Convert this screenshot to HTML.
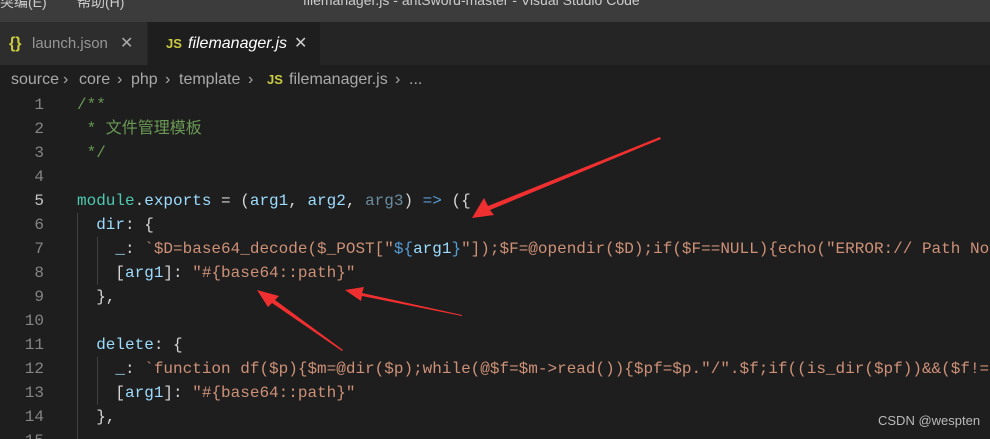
<!DOCTYPE html>
<html><head><meta charset="utf-8"><style>
html,body{margin:0;width:990px;height:439px;overflow:hidden}
body{background:#1e1e1e;font-family:"Liberation Sans","Noto Sans CJK SC",sans-serif;position:relative}
.title{position:absolute;left:0;top:0;width:990px;height:22px;background:#3c3c3c;color:#ccc;font-size:14px;overflow:hidden}
.tabs{position:absolute;top:22px;left:0;width:990px;height:43px;background:#252526}
.tab{position:absolute;top:0;height:43px;line-height:43px;font-size:16px}
.bc{position:absolute;top:65px;left:0;width:990px;height:30px;line-height:30px;color:#a9a9a9;font-size:16px}
.bc span{position:absolute;top:0}
.code{position:absolute;top:93px;left:0;font-family:"Liberation Mono","Noto Sans CJK SC",monospace;font-size:16px}
.l{height:24px;line-height:24px;position:relative;white-space:pre}
.n{position:absolute;left:0;width:44px;text-align:right;color:#858585}
.t{position:absolute;left:77px;color:#d4d4d4}
.c{color:#6a9955}.m{color:#4ec9b0}.v{color:#9cdcfe}.k{color:#569cd6}.s{color:#ce9178}
.g{position:absolute;width:1px;background:#404040}
</style></head><body>
<div class="title"><span style="position:absolute;left:0;top:-8px">突编(E)</span><span style="position:absolute;left:77px;top:-8px">帮助(H)</span><span style="position:absolute;left:303px;top:-8px">filemanager.js - antSword-master - Visual Studio Code</span></div>
<div class="tabs">
<div class="tab" style="left:0;width:147px;background:#2d2d2d;color:#969696"><span style="position:absolute;left:9px;color:#cbcb41;font-weight:bold">{}</span><span style="position:absolute;left:32px;font-size:15px">launch.json</span><span style="position:absolute;left:120px;color:#aaa">✕</span></div>
<div class="tab" style="left:148px;width:172px;background:#1e1e1e;color:#fff"><span style="position:absolute;left:18px;color:#cbcb41;font-size:13px;font-weight:bold">JS</span><span style="position:absolute;left:40px;font-style:italic">filemanager.js</span><span style="position:absolute;left:146px;color:#ccc">✕</span></div>
</div>
<div class="bc"><span style="left:11px">source</span><span style="left:63px">›</span><span style="left:79px">core</span><span style="left:117px">›</span><span style="left:131px">php</span><span style="left:165px">›</span><span style="left:179px">template</span><span style="left:248px">›</span><span style="left:267px;color:#cbcb41;font-size:13px;font-weight:bold">JS</span><span style="left:289px">filemanager.js</span><span style="left:395px">›</span><span style="left:409px">...</span></div>
<div class="g" style="left:77px;top:213px;height:226px"></div>
<div class="g" style="left:97px;top:237px;height:48px"></div>
<div class="g" style="left:97px;top:357px;height:48px"></div>
<div class="code"><div class="l"><span class="n">1</span><span class="t c">/**</span></div><div class="l"><span class="n">2</span><span class="t c"> * 文件管理模板</span></div><div class="l"><span class="n">3</span><span class="t c"> */</span></div><div class="l"><span class="n">4</span></div><div class="l"><span class="n" style="color:#c6c6c6">5</span><span class="t"><span class="m">module</span>.<span class="v">exports</span> = (<span class="v">arg1</span>, <span class="v">arg2</span>, <span style="color:#6b8ca0">arg3</span>) <span class="k">=&gt;</span> ({</span></div><div class="l"><span class="n">6</span><span class="t">  <span class="v">dir</span>: {</span></div><div class="l"><span class="n">7</span><span class="t">    <span class="v">_</span>: <span class="s">`$D=base64_decode($_POST["</span><span class="k">${</span><span class="v">arg1</span><span class="k">}</span><span class="s">"]);$F=@opendir($D);if($F==NULL){echo("ERROR:// Path No</span></span></div><div class="l"><span class="n">8</span><span class="t">    [<span class="v">arg1</span>]: <span class="s">"#{base64::path}"</span></span></div><div class="l"><span class="n">9</span><span class="t">  },</span></div><div class="l"><span class="n">10</span></div><div class="l"><span class="n">11</span><span class="t">  <span class="v">delete</span>: {</span></div><div class="l"><span class="n">12</span><span class="t">    <span class="v">_</span>: <span class="s">`function df($p){$m=@dir($p);while(@$f=$m-&gt;read()){$pf=$p."/".$f;if((is_dir($pf))&amp;&amp;($f!=</span></span></div><div class="l"><span class="n">13</span><span class="t">    [<span class="v">arg1</span>]: <span class="s">"#{base64::path}"</span></span></div><div class="l"><span class="n">14</span><span class="t">  },</span></div><div class="l"><span class="n">15</span></div></div>
<svg style="position:absolute;left:0;top:0" width="990" height="439">
<g fill="#f03030">
<polygon points="660,137 488,206 484,198 472,218 494,215 490,210 661,139"/>
<polygon points="462,315 362,293 364,287 345,290 361,301 362,296 462,316"/>
<polygon points="343,350 275,300 279,296 257,290 268,307 272,303 342,351"/>
</g></svg>
<div style="position:absolute;left:878px;top:413px;color:#bbb;font-size:13px">CSDN @wespten</div>
</body></html>
